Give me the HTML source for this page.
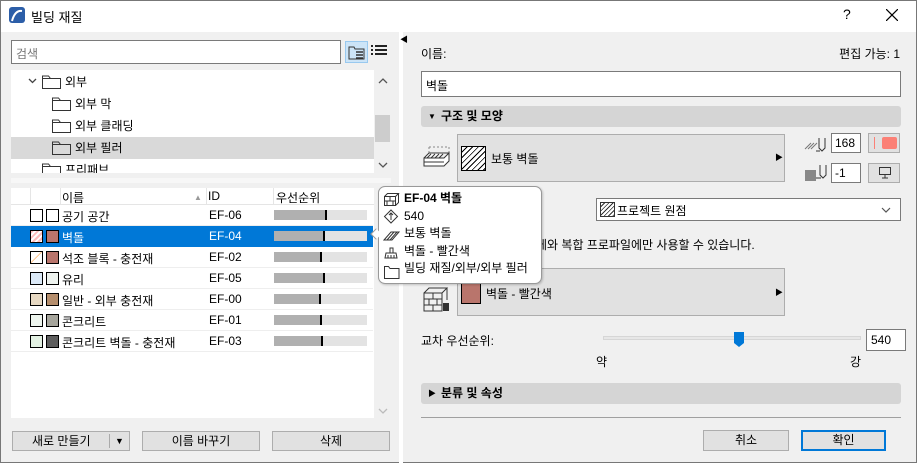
<!DOCTYPE html>
<html><head><meta charset="utf-8"><style>
*{box-sizing:border-box;margin:0;padding:0}
body{width:917px;height:463px;font-family:"Liberation Sans","Noto Sans CJK KR",sans-serif;font-size:12px;color:#000;background:#f0f0f0;position:relative;overflow:hidden}
.a{position:absolute}
.win{left:0;top:0;width:917px;height:463px;border:1px solid #777}
.btn{position:absolute;background:#e1e1e1;border:1px solid #adadad;text-align:center;line-height:18px}
.inp{position:absolute;background:#fff;border:1px solid #7a7a7a}
.row{position:absolute;left:11px;width:362px;height:21px;border-bottom:1px solid #eee}
.sw{position:absolute;top:4px;width:13px;height:13px;border:1px solid #000}
.bar{position:absolute;left:262px;top:5px;width:93px;height:10px;background:#e3e3e3}
.bar i{position:absolute;left:0;top:0;height:10px;background:#b0b0b0;border-right:2px solid #000}
.sec{position:absolute;left:421px;width:480px;height:21px;background:#d5d5d5;border-radius:3px;font-weight:bold;line-height:21px;padding-left:20px}
.fold{display:inline-block;width:19px;height:15px;margin-right:4px;vertical-align:-3px}
</style></head><body>
<div class="a win"></div>
<div class="a" style="left:1px;top:1px;width:915px;height:31px;background:#fff"></div>
<div class="a" style="left:9px;top:7px;width:16px;height:16px;background:#2c5ea8;border-radius:3px"><svg width="16" height="16"><path d="M3 14 Q6 3 13 4" stroke="#fff" stroke-width="2" fill="none"/></svg></div>
<div class="a" style="left:31px;top:7px;font-size:13px">빌딩 재질</div>
<div class="a" style="left:843px;top:6px;font-size:14px">?</div>
<svg class="a" style="left:886px;top:9px" width="12" height="12"><path d="M0 0L12 12M12 0L0 12" stroke="#000" stroke-width="1.2"/></svg>

<div class="inp" style="left:11px;top:40px;width:330px;height:24px;color:#777;padding:4px 4px">검색</div>
<div class="a" style="left:345px;top:41px;width:23px;height:22px;background:#cce4f7;border:1px solid #99c9ef"></div>
<svg class="a" style="left:348px;top:45px" width="18" height="15"><path d="M1 2h5l1 2h9v10H1z" fill="none" stroke="#333"/><path d="M8 7h7M8 10h7M8 13h7" stroke="#333" stroke-width="1.5"/></svg>
<svg class="a" style="left:371px;top:45px" width="16" height="12"><path d="M0 1h2M4 1h12M0 5h2M4 5h12M0 9h2M4 9h12" stroke="#222" stroke-width="2"/></svg>

<div class="a" style="left:11px;top:70px;width:363px;height:103px;background:#fff;overflow:hidden">
 <svg class="a" style="left:17px;top:8px" width="9" height="6"><path d="M1 1l3.5 3.5L8 1" stroke="#444" stroke-width="1.3" fill="none"/></svg>
 <div class="a" style="left:31px;top:3px"><svg class="fold"><path d="M0.5 2.5v12h18v-10h-10l-2-2.5h-6z M0.5 4.5h8" stroke="#333" fill="none"/></svg>외부</div>
 <div class="a" style="left:41px;top:25px"><svg class="fold"><path d="M0.5 2.5v12h18v-10h-10l-2-2.5h-6z M0.5 4.5h8" stroke="#333" fill="none"/></svg>외부 막</div>
 <div class="a" style="left:41px;top:47px"><svg class="fold"><path d="M0.5 2.5v12h18v-10h-10l-2-2.5h-6z M0.5 4.5h8" stroke="#333" fill="none"/></svg>외부 클래딩</div>
 <div class="a" style="left:0;top:67px;width:363px;height:22px;background:#d9d9d9"></div>
 <div class="a" style="left:41px;top:69px"><svg class="fold"><path d="M0.5 2.5v12h18v-10h-10l-2-2.5h-6z M0.5 4.5h8" stroke="#333" fill="none"/></svg>외부 필러</div>
 <div class="a" style="left:31px;top:91px"><svg class="fold"><path d="M0.5 2.5v12h18v-10h-10l-2-2.5h-6z M0.5 4.5h8" stroke="#333" fill="none"/></svg>프리패브</div>
</div>
<svg class="a" style="left:378px;top:78px" width="10" height="6"><path d="M1 5l4-4 4 4" stroke="#555" stroke-width="1.3" fill="none"/></svg>
<div class="a" style="left:375px;top:115px;width:15px;height:27px;background:#cdcdcd"></div>
<svg class="a" style="left:378px;top:162px" width="10" height="6"><path d="M1 1l4 4 4-4" stroke="#555" stroke-width="1.3" fill="none"/></svg>
<div class="a" style="left:11px;top:178px;width:380px;height:5px;background:#f7f7f7"></div>

<div class="a" style="left:11px;top:188px;width:363px;height:230px;background:#fff"></div>
<div class="a" style="left:11px;top:188px;width:363px;height:17px;border-bottom:1px solid #e5e5e5"></div>
<div class="a" style="left:30px;top:188px;width:1px;height:17px;background:#e5e5e5"></div>
<div class="a" style="left:60px;top:188px;width:1px;height:17px;background:#e5e5e5"></div>
<div class="a" style="left:206px;top:188px;width:1px;height:17px;background:#e5e5e5"></div>
<div class="a" style="left:273px;top:188px;width:1px;height:17px;background:#e5e5e5"></div>
<div class="a" style="left:62px;top:189px">이름</div><div class="a" style="left:194px;top:193px;font-size:8px;color:#999">▲</div>
<div class="a" style="left:208px;top:189px">ID</div>
<div class="a" style="left:276px;top:189px">우선순위</div>

<div class="row" style="top:205px"><div class="sw" style="left:19px"></div><div class="sw" style="left:35px"></div><span class="a" style="left:51px;top:3px">공기 공간</span><span class="a" style="left:198px;top:3px">EF-06</span><div class="bar" style="left:263px"><i style="width:53px"></i></div></div>
<div class="row" style="top:226px;background:#0078d7;color:#fff;border:0;height:21px"><div class="sw" style="left:19px;background:repeating-linear-gradient(135deg,#fbb 0 2px,#fff 2px 4px)"></div><div class="sw" style="left:35px;background:#b9756c"></div><span class="a" style="left:51px;top:3px">벽돌</span><span class="a" style="left:198px;top:3px">EF-04</span><div class="bar" style="left:263px"><i style="width:51px"></i></div></div>
<div class="row" style="top:247px"><div class="sw" style="left:19px;background:linear-gradient(135deg,#fff 45%,#f93 48%,#fff 52%)"></div><div class="sw" style="left:35px;background:#b9756c"></div><span class="a" style="left:51px;top:3px">석조 블록 - 충전재</span><span class="a" style="left:198px;top:3px">EF-02</span><div class="bar" style="left:263px"><i style="width:48px"></i></div></div>
<div class="row" style="top:268px"><div class="sw" style="left:19px;background:#dbe9f7"></div><div class="sw" style="left:35px;background:#eef3ef"></div><span class="a" style="left:51px;top:3px">유리</span><span class="a" style="left:198px;top:3px">EF-05</span><div class="bar" style="left:263px"><i style="width:51px"></i></div></div>
<div class="row" style="top:289px"><div class="sw" style="left:19px;background:#e6d8c2"></div><div class="sw" style="left:35px;background:#b58e6d"></div><span class="a" style="left:51px;top:3px">일반 - 외부 충전재</span><span class="a" style="left:198px;top:3px">EF-00</span><div class="bar" style="left:263px"><i style="width:47px"></i></div></div>
<div class="row" style="top:310px"><div class="sw" style="left:19px;background:#eef5ee"></div><div class="sw" style="left:35px;background:#a6a59c"></div><span class="a" style="left:51px;top:3px">콘크리트</span><span class="a" style="left:198px;top:3px">EF-01</span><div class="bar" style="left:263px"><i style="width:48px"></i></div></div>
<div class="row" style="top:331px"><div class="sw" style="left:19px;background:#e4f2e4"></div><div class="sw" style="left:35px;background:#5e5e5e"></div><span class="a" style="left:51px;top:3px">콘크리트 벽돌 - 충전재</span><span class="a" style="left:198px;top:3px">EF-03</span><div class="bar" style="left:263px"><i style="width:49px"></i></div></div>
<svg class="a" style="left:378px;top:408px" width="10" height="6"><path d="M1 1l4 4 4-4" stroke="#bbb" stroke-width="1.3" fill="none"/></svg>

<div class="btn" style="left:12px;top:431px;width:118px;height:20px;text-align:left;padding-left:19px">새로 만들기<span class="a" style="left:96px;top:2px;width:1px;height:14px;background:#aaa"></span><span class="a" style="left:102px;top:0;font-size:9px">▼</span></div>
<div class="btn" style="left:142px;top:431px;width:118px;height:20px">이름 바꾸기</div>
<div class="btn" style="left:272px;top:431px;width:118px;height:20px">삭제</div>

<div class="a" style="left:399px;top:32px;width:4px;height:431px;background:#fff"></div>
<div class="a" style="left:400px;top:34px;font-size:8px">◀</div>

<div class="a" style="left:421px;top:45px">이름:</div>
<div class="a" style="right:17px;top:45px">편집 가능: 1</div>
<div class="inp" style="left:421px;top:71px;width:480px;height:26px;padding:5px 4px">벽돌</div>
<div class="sec" style="top:106px"><span class="a" style="left:7px;top:0;font-size:8px">▼</span>구조 및 모양</div>
<svg class="a" style="left:423px;top:146px" width="28" height="25"><path d="M6 1h20v14M6 1v6" stroke="#888" stroke-dasharray="2 2" fill="none"/><path d="M1 12h20l5-5v8l-5 5H1z M1 12l5-5h20" stroke="#333" fill="#fff"/><path d="M4 12l4-4M8 12l4-4M12 12l4-4M16 12l4-4" stroke="#333"/><path d="M1 16h20" stroke="#333"/></svg>
<div class="btn" style="left:457px;top:134px;width:328px;height:48px;background:#e1e1e1"></div>
<div class="a" style="left:461px;top:146px;width:25px;height:25px;border:1px solid #000;background:repeating-linear-gradient(135deg,#fff 0 3px,#000 3px 4px)"></div>
<div class="a" style="left:491px;top:150px">보통 벽돌</div>
<div class="a" style="left:775px;top:152px;font-size:8px">▶</div>
<svg class="a" style="left:804px;top:137px" width="24" height="16"><path d="M1 12l6-6M4 12l6-6M7 12l6-6" stroke="#777"/><path d="M15 1v10l3 3 3-3V1M12 14h4" stroke="#333" fill="none"/></svg>
<div class="inp" style="left:831px;top:133px;width:30px;height:20px;padding:2px 3px">168</div>
<div class="btn" style="left:868px;top:133px;width:32px;height:20px"><span class="a" style="left:13px;top:3px;width:15px;height:12px;background:#fb8076;border-radius:2px"></span><span class="a" style="left:5px;top:3px;width:1px;height:12px;background:#fb8076"></span></div>
<div class="a" style="left:805px;top:170px;width:11px;height:11px;background:#888"></div>
<svg class="a" style="left:815px;top:164px" width="14" height="18"><path d="M5 1v10l3 3 3-3V1M1 14h5" stroke="#333" fill="none"/></svg>
<div class="inp" style="left:831px;top:163px;width:30px;height:20px;padding:2px 3px">-1</div>
<div class="btn" style="left:868px;top:163px;width:32px;height:20px"><svg class="a" style="left:10px;top:3px" width="12" height="12"><path d="M0.5 0.5h11v7h-11zM6 7.5v3M3 11h6" stroke="#333" fill="none"/></svg></div>
<div class="inp" style="left:596px;top:198px;width:305px;height:23px;padding:3px 0 0 20px">프로젝트 원점<span class="a" style="left:3px;top:3px;width:15px;height:15px;border:1px solid #333;background:repeating-linear-gradient(135deg,#fff 0 2px,#333 2px 3px)"></span><svg class="a" style="right:9px;top:8px" width="10" height="6"><path d="M1 1l4 4 4-4" stroke="#555" stroke-width="1.2" fill="none"/></svg></div>
<div class="a" style="left:536px;top:236px">체와 복합 프로파일에만 사용할 수 있습니다.</div>
<svg class="a" style="left:423px;top:285px" width="28" height="28"><path d="M1 8h18v18H1zM1 14h18M1 20h18M10 8v6M6 14v6M14 14v6M10 20v6M1 8l5-5h18l-5 5M24 3v12" stroke="#333" fill="none"/><path d="M20 18h6v8h-6z" fill="#333"/></svg>
<div class="btn" style="left:457px;top:268px;width:328px;height:48px"></div>
<div class="a" style="left:461px;top:279px;width:20px;height:25px;border:1px solid #000;background:#b9756c"></div>
<div class="a" style="left:486px;top:285px">벽돌 - 빨간색</div>
<div class="a" style="left:775px;top:287px;font-size:8px">▶</div>
<div class="a" style="left:421px;top:332px">교차 우선순위:</div>
<div class="a" style="left:603px;top:336px;width:258px;height:4px;background:#e7e7e7;border:1px solid #d6d6d6"></div>
<svg class="a" style="left:734px;top:332px" width="10" height="15"><path d="M0 0h10v11l-5 4-5-4z" fill="#0078d7"/></svg>
<div class="inp" style="left:866px;top:329px;width:40px;height:22px;padding:3px 4px">540</div>
<div class="a" style="left:596px;top:353px">약</div>
<div class="a" style="left:850px;top:353px">강</div>
<div class="sec" style="top:383px"><span class="a" style="left:7px;top:0;font-size:8px">▶</span>분류 및 속성</div>
<div class="a" style="left:421px;top:417px;width:480px;height:1px;background:#a0a0a0"></div>
<div class="btn" style="left:703px;top:430px;width:86px;height:21px">취소</div>
<div class="btn" style="left:801px;top:430px;width:85px;height:21px;border:2px solid #0078d7;line-height:17px">확인</div>

<div class="a" style="left:378px;top:186px;width:164px;height:98px;background:#fff;border:1px solid #999;border-radius:7px;box-shadow:1px 1px 2px rgba(0,0,0,.2)"></div>
<div class="a" style="left:372px;top:230px;width:8px;height:8px;background:#fff;border-left:1px solid #999;border-bottom:1px solid #999;transform:rotate(45deg)"></div>
<div class="a" style="left:383px;top:190px;line-height:17.6px;font-size:12px">
<div><b style="margin-left:21px">EF-04 벽돌</b></div>
<div style="margin-left:21px">540</div>
<div style="margin-left:21px">보통 벽돌</div>
<div style="margin-left:21px">벽돌 - 빨간색</div>
<div style="margin-left:21px">빌딩 재질/외부/외부 필러</div>
</div>
<svg class="a" style="left:383px;top:191px" width="18" height="90"><path d="M1.5 5.5h11v9h-11zM1.5 10h11M7 5.5v4.5M4 10v4.5M10 10v4.5M1.5 5.5l3-3h11l-3 3M15.5 2.5v9l-3 3" stroke="#333" fill="none"/><path d="M8 19l6.5 6.5L8 32l-6.5-6.5z M8 22v7M6 24l2-2 2 2" stroke="#333" fill="none"/><path d="M1 49l7-8h8l-7 8zM4 49l7-8M7 49l7-8" stroke="#333" fill="none"/><path d="M7 57v5h3v-5zM3 62h10l1 5H2z M5 67v-3M8 67v-3M11 67v-3" stroke="#333" fill="none"/><path d="M1.5 75.5h4l1.5 2h9v10h-14.5z" stroke="#333" fill="none"/></svg>
</body></html>
